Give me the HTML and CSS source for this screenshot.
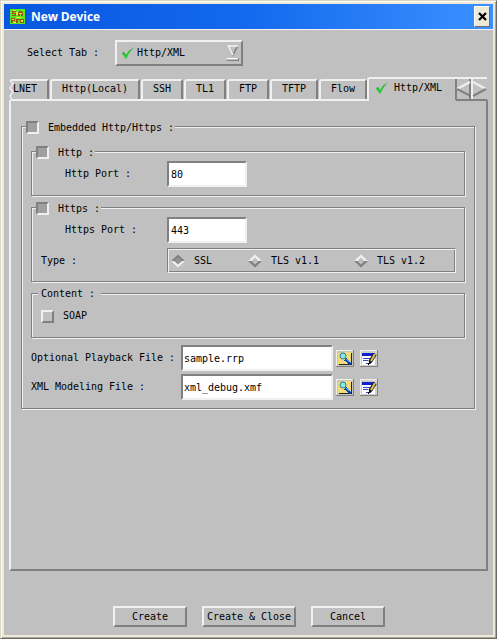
FILE: index.html
```html
<!DOCTYPE html>
<html lang="en">
<head>
<meta charset="utf-8">
<title>New Device</title>
<link rel="stylesheet" href="styles.css">
</head>
<body>
<svg width="0" height="0" class="defs">
  <defs>
    <symbol id="check" viewBox="0 0 14 14"><path d="M1 7L3 6L5 9Q8 4 13 1Q8 6 5 13Z" fill="#16b51b"/><path d="M2 8l3 3 3-5" fill="none" stroke="#2bd330" stroke-width="1.500"/></symbol>
    <symbol id="browse" viewBox="0 0 18 17" shape-rendering="crispEdges">
      <path d="M0 0h18v17H0z" fill="#808080"/><path d="M0 0h17v16H0z" fill="#f0f0e8"/><path d="M1 1h16v15H1z" fill="#c8c4b8"/>
      <path d="M2 3h7v-1h6v12H2z" fill="#f4dc78"/><path d="M15 3v11H3" fill="none" stroke="#202020"/>
      <path d="M9 9l6 5" stroke="#1038b0" stroke-width="3"/><path d="M9 8l6 5" stroke="#50a0f0"/>
      <circle cx="7" cy="6" r="3" fill="#80e8e8" stroke="#387c88" shape-rendering="auto"/>
    </symbol>
    <symbol id="edit" viewBox="0 0 18 17" shape-rendering="crispEdges">
      <path d="M0 0h18v17H0z" fill="#808080"/><path d="M0 0h17v16H0z" fill="#f0f0e8"/><path d="M1 1h16v15H1z" fill="#d0cec8"/><path d="M2 3h13v12H2z" fill="#fff"/>
      <path d="M2 3h13v3H2z" fill="#1020d0"/><path d="M3 8.500h8M3 10.500h5M6 13.500h5" stroke="#3448d0"/>
      <path d="M10 12l5-8" stroke="#202020" stroke-width="4" shape-rendering="auto"/><path d="M11 11l4-7" stroke="#e8c050" stroke-width="2" shape-rendering="auto"/>
      <path d="M9 11l2 2-3 2z" fill="#111"/>
    </symbol>
    <symbol id="diamond" viewBox="0 0 14 14"><path d="M0 7l7-6.500 7 6.500z" fill="#f0f0f0"/><path d="M0 7l7 6.500 7-6.500z" fill="#808080"/><path d="M3.500 7L7 3.500 10.500 7 7 10.500z" fill="#c0c0c0"/></symbol>
    <symbol id="diamond-on" viewBox="0 0 14 14"><path d="M0 7l7-6.500 7 6.500z" fill="#808080"/><path d="M0 7l7 6.500 7-6.500z" fill="#f0f0f0"/><path d="M3 7l4-4 4 4-4 3.500z" fill="#929292"/></symbol>
  </defs>
</svg>
<div class="window">
  <header class="titlebar">
    <svg class="app-icon" width="15" height="15" viewBox="0 0 15 15" shape-rendering="crispEdges"><path d="M0 0h15v15H0z" fill="#58ea20"/><path d="M2 2h4v1H3v1h3v3H2V6h3V5H2zM8 3h1V2h3v1h1v4h-2V5h-1v2H8zM1 9h4v3H3v2H1zM6 10h4v1H8v3H6zM10 10h4v4h-4z" fill="#a05018"/><path d="M3 1h3v1H3zM6 3h2v3H6zM9 4h3v1H9zM2 10h2v1H2zM6 8h5v1H6zM11 11h2v2h-2zM3 13h3v1H3z" fill="#f0e828"/></svg>
    <h1>New Device</h1>
    <button class="close" aria-label="Close"><svg width="9" height="9" viewBox="0 0 9 9"><path d="M1 1l7 7M8 1l-7 7" stroke="#000" stroke-width="2.200"/></svg></button>
  </header>
  <main>
    <div class="select-row">
      <span>Select Tab :</span>
      <button class="dropdown"><svg width="14" height="14"><use href="#check"/></svg><span>Http/XML</span>
        <svg class="arrow" width="12" height="16" viewBox="0 0 12 16"><path d="M10.500 1L6 10L1 1" fill="none" stroke="#808080" stroke-width="1.600"/><path d="M11 1H1l5 9" fill="none" stroke="#f4f4f4" stroke-width="1.600"/><path d="M0 13h12v3H0z" fill="#808080"/><path d="M0 13h11v1.500H0z" fill="#fff"/></svg>
      </button>
    </div>
    <nav class="tabs">
      <button class="tab cut"><svg width="5" height="20" viewBox="0 0 5 20"><path d="M0 0h2l2 4-3 4 3 4-3 4 2 4H0z" fill="#c0c0c0"/><path d="M1 0l3 4-3 4 3 4-3 4 2 4" fill="none" stroke="#f0f0f0" stroke-width="1.500"/></svg>LNET</button>
      <button class="tab local">Http(Local)</button>
      <button class="tab short">SSH</button>
      <button class="tab short">TL1</button>
      <button class="tab short">FTP</button>
      <button class="tab medium">TFTP</button>
      <button class="tab medium">Flow</button>
      <button class="tab active"><svg width="14" height="14"><use href="#check"/></svg>Http/XML</button>
      <button class="scroll" aria-label="Previous"><svg width="16" height="24" viewBox="0 0 16 24"><path d="M1 1v22" stroke="#808080" stroke-width="2"/><path d="M0 1h16" stroke="#f0f0f0" stroke-width="2"/><path d="M15 2v21M1 23h15" stroke="#808080" stroke-width="2"/><path d="M15 5L2 12" stroke="#f0f0f0" stroke-width="2"/><path d="M2 12l14 7" stroke="#808080" stroke-width="2"/></svg></button>
      <button class="scroll" aria-label="Next"><svg width="16" height="24" viewBox="0 0 16 24"><path d="M1 23V1h15" fill="none" stroke="#f0f0f0" stroke-width="2"/><path d="M0 23h16" stroke="#808080" stroke-width="2"/><path d="M2 5l13 7" stroke="#f0f0f0" stroke-width="2"/><path d="M15 12L2 19" stroke="#808080" stroke-width="2"/></svg></button>
    </nav>
    <section class="panel">
      <div class="group outer">
        <div class="legend"><i class="box on"></i><span>Embedded Http/Https :</span></div>
        <div class="group http">
          <div class="legend"><i class="box on"></i><span>Http :</span></div>
          <div class="port"><label>Http Port :</label><div class="field">80</div></div>
        </div>
        <div class="group https">
          <div class="legend"><i class="box on"></i><span>Https :</span></div>
          <div class="port"><label>Https Port :</label><div class="field">443</div></div>
          <div class="type"><label>Type :</label>
            <div class="radios">
              <span class="ssl"><svg width="14" height="14"><use href="#diamond-on"/></svg>SSL</span>
              <span class="tls"><svg width="14" height="14"><use href="#diamond"/></svg>TLS v1.1</span>
              <span class="tls"><svg width="14" height="14"><use href="#diamond"/></svg>TLS v1.2</span>
            </div>
          </div>
        </div>
        <div class="group content">
          <div class="legend plain"><span>Content :</span></div>
          <div class="soap"><i class="box"></i><span>SOAP</span></div>
        </div>
        <div class="file first"><label>Optional Playback File :</label><div class="field">sample.rrp</div><svg width="18" height="17"><use href="#browse"/></svg><svg width="18" height="17"><use href="#edit"/></svg></div>
        <div class="file"><label>XML Modeling File :</label><div class="field">xml_debug.xmf</div><svg width="18" height="17"><use href="#browse"/></svg><svg width="18" height="17"><use href="#edit"/></svg></div>
      </div>
    </section>
    <footer>
      <button class="action">Create</button>
      <button class="action wide">Create &amp; Close</button>
      <button class="action">Cancel</button>
    </footer>
  </main>
</div>
</body>
</html>
```
FILE: styles.css
```css
* { box-sizing: border-box; }
body { margin: 0; background: #c0c0c0; overflow: hidden; }
body, button {
  font: 10px/14px "DejaVu Sans Mono", monospace;
  letter-spacing: -0.02px;
  color: #000;
}
button { margin: 0; padding: 0; background: #c0c0c0; border-radius: 0; white-space: nowrap; }
svg { display: block; flex: none; }
.defs { display: none; }
label, span { white-space: nowrap; }

.window {
  width: 497px;
  height: 639px;
  border: 1px solid;
  border-color: #d8d4c4 #686860 #686860 #d8d4c4;
  box-shadow: inset 1px 1px #fffff4, inset -1px -1px #aaa898, inset 3px 3px #ece9d8, inset -3px -3px #ece9d8;
  padding: 3px;
}
.titlebar {
  display: flex;
  align-items: center;
  height: 26px;
  padding: 0 3px 0 6px;
  border-bottom: 1px solid #f4f4f4;
  background: linear-gradient(90deg, #0857e0, #1469ee 50%, #3c91ff);
}
h1 {
  margin: 0 auto 0 6px;
  font: bold 12px/16px "Open Sans", "Noto Sans", sans-serif;
  letter-spacing: -0.1px;
  color: #fff;
}
.close {
  display: flex;
  align-items: center;
  justify-content: center;
  width: 16px;
  height: 21px;
  border: 1px solid;
  border-color: #fff #716f64 #716f64 #fff;
  background: #ece9d8;
}
main { padding: 9px 5px 0; }
.select-row { display: flex; align-items: center; padding-left: 18px; height: 27px; }
.dropdown {
  display: flex;
  align-items: center;
  width: 128px;
  height: 26px;
  margin: 1px 0 0 16px;
  padding: 0 2px 0 4px;
  border: 2px solid;
  border-color: #f0f0f0 #808080 #808080 #f0f0f0;
}
.dropdown span { margin-left: 2px; }
.arrow { margin-left: auto; }

.tabs { display: flex; align-items: flex-end; height: 22px; margin-top: 11px; }
.tab {
  height: 20px;
  margin: 0 0 0 1px;
  padding-bottom: 2px;
  border: 2px solid;
  border-color: #f0f0f0 #808080 transparent #f0f0f0;
  border-bottom: 0;
  border-radius: 3px 0 0 0;
}
.cut { display: flex; align-items: center; width: 40px; margin-left: 0; padding: 0 0 2px; border-left: 0; }
.cut svg { margin: 2px -1px 0 0; }
.local { width: 90px; margin-left: 1px; }
.short { width: 42px; }
.medium { width: 48px; }
.active {
  display: flex;
  align-items: center;
  width: 88px;
  height: 24px;
  margin: 0 0 -2px;
  padding: 0 0 5px 6px;
  border-right: 0;
  z-index: 1;
}
.active svg { margin-right: 5px; }
.scroll {
  width: 16px;
  height: 24px;
  margin-bottom: -2px;
  border: 0;
  z-index: 1;
}
.panel {
  width: 479px;
  height: 472px;
  padding: 25px 10px 0;
  border: 2px solid;
  border-color: #f0f0f0 #808080 #808080 #f0f0f0;
}
.group { border: 1px solid #808080; box-shadow: 1px 1px #f0f0f0, inset 1px 1px #f0f0f0; }
.outer { width: 454px; height: 283px; padding: 0 9px; }
.legend {
  display: flex;
  align-items: center;
  width: max-content;
  height: 14px;
  margin-top: -7px;
  padding-right: 1px;
  background: #c0c0c0;
}
.outer > .legend { margin-left: -5px; }
.http > .legend, .https > .legend { margin-left: 4px; }
.legend span { margin-left: 9px; padding-top: 2px; }
.legend.plain span { margin-left: 0; padding-top: 0; }
.box {
  display: block;
  width: 13px;
  height: 13px;
  border: 2px solid;
  border-color: #f0f0f0 #808080 #808080 #f0f0f0;
}
.box.on { border-color: #808080 #f0f0f0 #f0f0f0 #808080; background: #a0a0a0; }
.http { width: 434px; height: 45px; margin-top: 17px; }
.https { width: 434px; height: 75px; margin-top: 11px; }
.content { width: 434px; height: 45px; margin-top: 11px; }
.port { display: grid; grid-template-columns: 102px 80px; padding-left: 33px; margin-top: 2px; }
.port label { line-height: 25px; }
.field {
  height: 26px;
  padding: 0 2px;
  border: 2px solid;
  border-color: #808080 #f0f0f0 #f0f0f0 #808080;
  background: #fff;
  line-height: 24px;
}
.type { display: grid; grid-template-columns: 126px 289px; padding-left: 9px; margin-top: 5px; }
.type label { line-height: 25px; }
.radios {
  display: flex;
  align-items: center;
  height: 25px;
  padding-left: 3px;
  border: 1px solid;
  border-color: #808080 #f0f0f0 #f0f0f0 #808080;
  box-shadow: inset 1px 1px #f0f0f0, inset -1px -1px #808080;
}
.radios span { display: flex; flex: none; align-items: center; }
.radios svg { margin-right: 9px; }
.ssl { width: 77px; }
.tls { width: 106px; }
.plain { margin-left: 6px; padding: 0 6px 0 3px; }
.soap { display: flex; align-items: center; margin: 8px 0 0 9px; }
.soap span { margin-left: 9px; }
.file { display: grid; grid-template-columns: 150px 152px 18px 18px; align-items: center; margin-top: 3px; }
.file.first { margin-top: 7px; }
.file label { padding-bottom: 1px; }
.file .field { padding: 0 1px; }
.file svg { margin-left: 3px; }
.file svg:last-child { margin-left: 9px; }
footer { display: flex; gap: 15px; margin: 35px 0 0 104px; }
.action {
  width: 74px;
  height: 21px;
  border: 2px solid;
  border-color: #f0f0f0 #808080 #808080 #f0f0f0;
}
.wide { width: 94px; }
```
